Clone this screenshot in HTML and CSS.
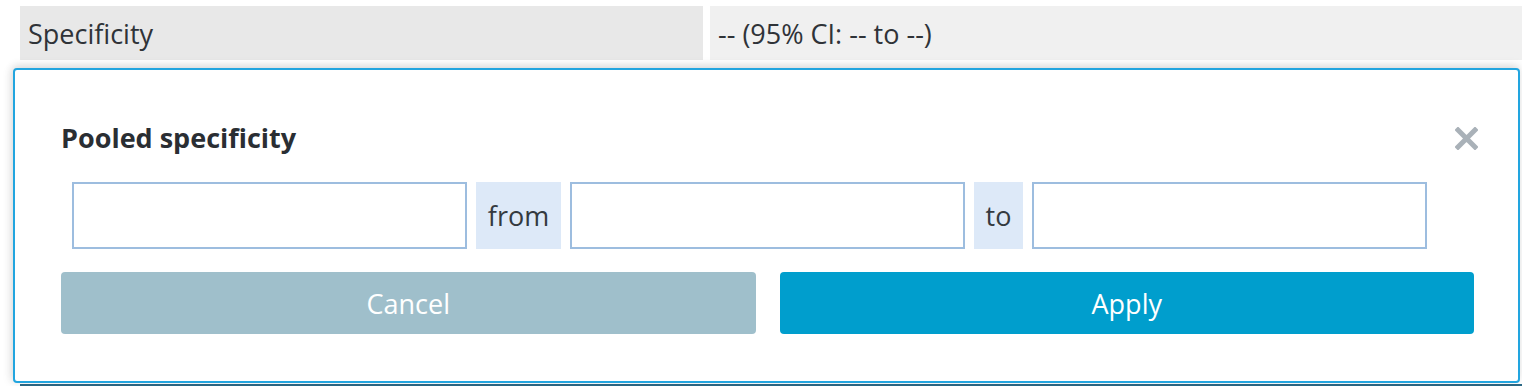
FILE: index.html
```html
<!DOCTYPE html>
<html lang="en">
<head>
  <meta charset="UTF-8" />
  <meta name="viewport" content="width=device-width, initial-scale=1.0" />
  <title>Pooled specificity</title>
  <link rel="stylesheet" href="styles.css">
</head>
<body>
  <div class="page">
    <div class="stat-row">
      <div class="stat-label">Specificity</div>
      <div class="stat-value">-- (95% CI: -- to --)</div>
    </div>

    <div class="modal">
      <button class="close" type="button" aria-label="Close">
        <svg width="23" height="23" viewBox="0 0 23 23">
          <path d="M3 3 L20 20 M20 3 L3 20" stroke="#a9b1b8" stroke-width="5" stroke-linecap="square" fill="none" />
        </svg>
      </button>
      <h3 class="modal-title">Pooled specificity</h3>

      <div class="range-group">
        <input type="text" class="value" autofocus />
        <span class="addon addon-from">from</span>
        <input type="text" class="lower" />
        <span class="addon addon-to">to</span>
        <input type="text" class="upper" />
      </div>

      <div class="actions">
        <button class="btn btn-cancel" type="button">Cancel</button>
        <button class="btn btn-apply" type="button">Apply</button>
      </div>
    </div>
    <div class="behind"></div>
  </div>
</body>
</html>
```

FILE: styles.css
```css
:root {
  --label-bg: #e8e8e8;
  --value-bg: #f0f0f0;
  --text: #2f3338;
  --modal-border: #22a5df;
  --input-border: #9dbddf;
  --addon-bg: #dde9f8;
  --cancel: #9fbfcb;
  --apply: #009ecd;
}

body {
  font-family: 'Open Sans', 'Noto Sans', sans-serif;
  background-color: #ffffff;
  margin: 0;
  padding: 0;
  color: var(--text);
  overflow: hidden;
}

.page {
  display: flex;
  flex-direction: column;
}

.stat-row {
  display: grid;
  grid-template-columns: 683px 1fr;
  gap: 7px;
  margin: 6px 0 0 20px;
  height: 54px;
}

.stat-label,
.stat-value {
  display: flex;
  align-items: center;
  padding-left: 8px;
  font-size: 27px;
}

.stat-label {
  background-color: var(--label-bg);
}

.stat-value {
  background-color: var(--value-bg);
}

.modal {
  position: relative;
  margin: 8px 0 0 13px;
  width: 1507px;
  box-sizing: border-box;
  border: 2px solid var(--modal-border);
  border-radius: 4px;
  background-color: #ffffff;
  padding: 50px 44px 47px 46px;
  box-shadow: 0 -3px 8px rgba(0, 0, 0, 0.12), -4px 0 8px rgba(0, 0, 0, 0.06);
}

.close {
  position: absolute;
  top: 57px;
  right: 40px;
  padding: 0;
  border: 0;
  background: none;
  width: 23px;
  height: 23px;
  cursor: pointer;
}

.close svg {
  display: block;
}

.modal-title {
  margin: 0;
  font-size: 27px;
  line-height: 35px;
  font-weight: bold;
  color: #2a2e33;
}

.range-group {
  display: flex;
  gap: 9px;
  margin: 27px 0 0 11px;
  height: 67px;
}

.range-group input {
  width: 395px;
  height: 67px;
  box-sizing: border-box;
  border: 2px solid var(--input-border);
  padding: 0 22px;
  font-family: inherit;
  font-size: 27px;
  color: var(--text);
  caret-color: #333333;
  outline: none;
}

.addon {
  display: flex;
  align-items: center;
  justify-content: center;
  background-color: var(--addon-bg);
  font-size: 27px;
  color: #343a40;
}

.addon-from {
  width: 85px;
}

.addon-to {
  width: 49px;
}

.actions {
  display: grid;
  grid-template-columns: 1fr 1fr;
  gap: 24px;
  margin-top: 23px;
}

.btn {
  height: 62px;
  border: 0;
  border-radius: 4px;
  color: #ffffff;
  font-family: inherit;
  font-size: 27px;
  cursor: pointer;
}

.btn-cancel {
  background-color: var(--cancel);
}

.btn-apply {
  background-color: var(--apply);
}

.behind {
  margin: 1px 0 0 20px;
  height: 3px;
  background-color: #2d6a86;
}
```
